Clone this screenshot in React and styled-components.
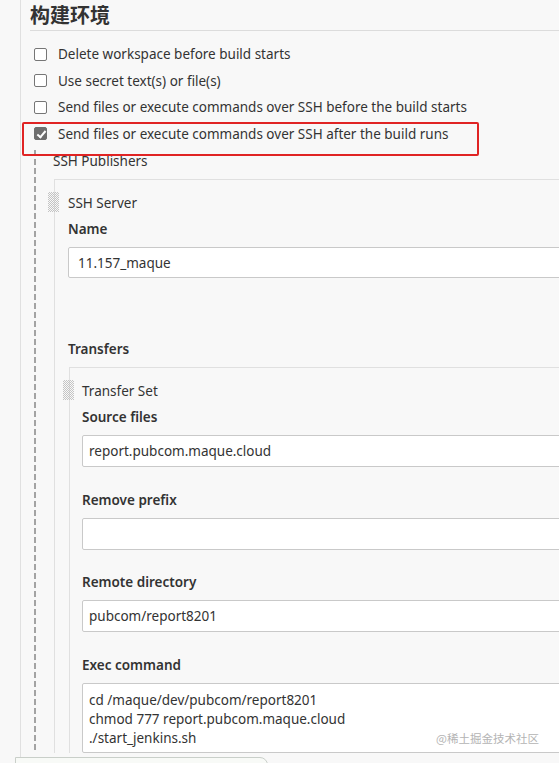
import React from "react"
import styled, { createGlobalStyle } from "styled-components"

const GlobalStyle = createGlobalStyle`
  html, body {
    margin: 0;
    padding: 0;
    overflow: hidden;
    background: #f8f8f8;
  }
  body {
    font-family: "Noto Sans", "Noto Sans CJK SC", sans-serif;
    color: #333;
  }
`

const Page = styled.div`
  position: relative;
  width: 620px;
  height: 763px;
  overflow: hidden;
`

const Section = styled.section`
  margin-left: 20px;
  border-left: 1px solid #e0e0e0;
  padding-left: 9px;
  min-height: 763px;
`

const SectionTitle = styled.h2`
  margin: 0;
  height: 30px;
  border-bottom: 1px solid #dcdcdc;
  font-family: "Noto Sans CJK SC", sans-serif;
  font-size: 20px;
  font-weight: 700;
  line-height: 30px;
  color: #333;
`

const OptionList = styled.div`
  margin-top: 10px;
`

const OptionRow = styled.label`
  position: relative;
  display: flex;
  align-items: center;
  gap: 11px;
  height: 26.5px;
  padding-left: 4px;
  font-size: 13.5px;
  color: #333;

  ${(p) => p.highlighted && `
    &::after {
      content: "";
      position: absolute;
      left: -8px;
      top: 1px;
      width: 457px;
      height: 34px;
      box-sizing: border-box;
      border: 2px solid #e02424;
      border-radius: 2px;
      pointer-events: none;
    }
  `}
`

const Checkbox = styled.input.attrs({ type: "checkbox", readOnly: true })`
  appearance: none;
  position: relative;
  margin: 0;
  width: 13px;
  height: 13px;
  flex: none;
  box-sizing: border-box;
  border: 1px solid #767676;
  border-radius: 2px;
  background: #fff;

  &:checked {
    background: #6e6e6e;
    border-color: #6e6e6e;
  }
  &:checked::after {
    content: "";
    position: absolute;
    left: 3.5px;
    top: 0.5px;
    width: 3px;
    height: 7px;
    border: solid #fff;
    border-width: 0 2px 2px 0;
    transform: rotate(40deg);
  }
`

const Nested = styled.div`
  margin-left: 4px;
  padding: 4px 0 0 19px;
  background: repeating-linear-gradient(#a3a3a3 0 6px, transparent 6px 9px) left 3px / 2px 100% no-repeat;
`

const GroupLabel = styled.div`
  font-size: 13.5px;
  font-weight: ${(p) => (p.strong ? 600 : 400)};
  line-height: 20px;
  color: #333;
  margin-bottom: 8px;
`

const RepeatedBlock = styled.div`
  position: relative;
  margin-left: 1px;
  border-left: 1px solid #e0e0e0;
  border-top: 1px solid #e0e0e0;
  padding: 13px 0 0 ${(p) => p.inset}px;
`

const DragHandle = styled.span`
  position: absolute;
  left: -7px;
  top: 12px;
  width: 11px;
  height: 20px;
  background: repeating-conic-gradient(#c4c4c4 0 25%, transparent 0 50%) 0 0 / 2px 2px;
`

const BlockTitle = styled.div`
  font-size: 13.5px;
  line-height: 20px;
  color: #333;
`

const Field = styled.div`
  margin-top: ${(p) => p.gap}px;
`

const FieldLabel = styled.div`
  font-size: 13.5px;
  font-weight: 600;
  line-height: 20px;
  color: #333;
  margin-bottom: 8px;
`

const TextInput = styled.input.attrs({ type: "text", readOnly: true })`
  display: block;
  width: 560px;
  height: ${(p) => p.h || 31}px;
  box-sizing: border-box;
  margin: 0;
  padding: 0 ${(p) => p.pad || 6}px;
  border: 1px solid #c9c9c9;
  border-radius: 2px;
  background: #fff;
  font-family: inherit;
  font-size: 13.5px;
  color: #333;
  outline: none;
`

const CommandArea = styled.textarea.attrs({ readOnly: true })`
  display: block;
  width: 560px;
  height: 70px;
  box-sizing: border-box;
  margin: 0;
  padding: 7px 6px;
  border: 1px solid #c9c9c9;
  border-radius: 2px;
  background: #fff;
  font-family: inherit;
  font-size: 13.5px;
  line-height: 19px;
  color: #333;
  resize: none;
  overflow: hidden;
  outline: none;
`

const Transfers = styled.div`
  margin-top: 61px;
`

const Watermark = styled.div`
  position: absolute;
  left: 436px;
  top: 729px;
  font-family: "Noto Sans CJK SC", sans-serif;
  font-size: 11.5px;
  line-height: 18px;
  color: #b4b4b4;
  pointer-events: none;
`

const BottomBar = styled.div`
  position: absolute;
  left: 15px;
  top: 757px;
  width: 253px;
  height: 20px;
  box-sizing: border-box;
  border: 1px solid #c9cfc9;
  border-radius: 0 8px 0 0;
  background: #f8faf7;
`

const options = [
  { label: "Delete workspace before build starts" },
  { label: "Use secret text(s) or file(s)" },
  { label: "Send files or execute commands over SSH before the build starts" },
  { label: "Send files or execute commands over SSH after the build runs", checked: true },
]

const transferFields = [
  { label: "Source files", value: "report.pubcom.maque.cloud" },
  { label: "Remove prefix", value: "" },
  { label: "Remote directory", value: "pubcom/report8201" },
]

const execCommand = "cd /maque/dev/pubcom/report8201\nchmod 777 report.pubcom.maque.cloud\n./start_jenkins.sh"

export default function App() {
  return (
    <Page>
      <GlobalStyle />
      <Section>
        <SectionTitle>构建环境</SectionTitle>
        <OptionList>
          {options.map((o) => (
            <OptionRow key={o.label} highlighted={o.checked}>
              <Checkbox checked={!!o.checked} />
              <span>{o.label}</span>
            </OptionRow>
          ))}
        </OptionList>

        <Nested>
          <GroupLabel>SSH Publishers</GroupLabel>
          <RepeatedBlock inset={13}>
            <DragHandle />
            <BlockTitle>SSH Server</BlockTitle>
            <Field gap={6}>
              <FieldLabel>Name</FieldLabel>
              <TextInput pad={9} value="11.157_maque" />
            </Field>

            <Transfers>
              <GroupLabel strong>Transfers</GroupLabel>
              <RepeatedBlock inset={12}>
                <DragHandle />
                <BlockTitle>Transfer Set</BlockTitle>
                {transferFields.map((f, i) => (
                  <Field key={f.label} gap={i === 0 ? 6 : 22.5}>
                    <FieldLabel>{f.label}</FieldLabel>
                    <TextInput h={32} value={f.value} />
                  </Field>
                ))}
                <Field gap={22.5}>
                  <FieldLabel>Exec command</FieldLabel>
                  <CommandArea value={execCommand} />
                </Field>
              </RepeatedBlock>
            </Transfers>
          </RepeatedBlock>
        </Nested>
      </Section>
      <Watermark>@稀土掘金技术社区</Watermark>
      <BottomBar />
    </Page>
  )
}
